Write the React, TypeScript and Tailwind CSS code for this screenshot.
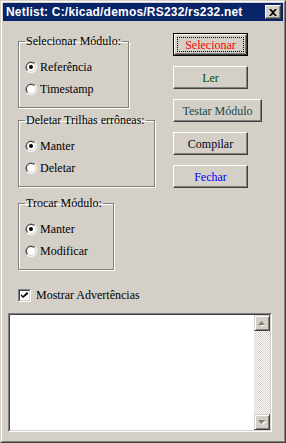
import type { ReactNode } from "react";

const FACE = "bg-[#d4d0c8]";

function Radio({ checked }: { checked: boolean }) {
  return (
    <svg width="12" height="12" viewBox="0 0 12 12" className="shrink-0">
      <circle cx="6" cy="6" r="6" fill="#ffffff" />
      <path d="M1.76 10.24 A6 6 0 0 1 10.24 1.76 Z" fill="#808080" />
      <circle cx="6" cy="6" r="5" fill="#d4d0c8" />
      <path d="M2.46 9.54 A5 5 0 0 1 9.54 2.46 Z" fill="#404040" />
      <circle cx="6" cy="6" r="4" fill="#ffffff" />
      {checked && <circle cx="6" cy="6" r="2" fill="#000000" />}
    </svg>
  );
}

function Group({ title, width, options, className }: { title: string; width: string; options: string[]; className?: string }) {
  return (
    <fieldset
      className={`${width} ${className ?? ""} border border-[#808080] pl-[6px] pt-[7px] pb-[7px] shadow-[inset_1px_1px_0_#ffffff,1px_1px_0_#ffffff]`}
    >
      <legend className="px-[1px] text-[12px] leading-[15px]">{title}</legend>
      {options.map((o, i) => (
        <div key={o} className="flex h-[22px] items-center gap-[3px]">
          <Radio checked={i === 0} />
          <span className="text-[12px] leading-[15px]">{o}</span>
        </div>
      ))}
    </fieldset>
  );
}

function Button({ children, width = "w-[75px]", color, isDefault }: { children: ReactNode; width?: string; color: string; isDefault?: boolean }) {
  if (isDefault) {
    return (
      <div className={`${width} h-[23px] border border-black`}>
        <div className="h-full border border-t-white border-l-white border-r-[#404040] border-b-[#404040] shadow-[inset_-1px_-1px_0_#808080] p-[2px]">
          <div className={`flex h-full items-center justify-center border border-dotted border-black text-[12px] ${color}`}>{children}</div>
        </div>
      </div>
    );
  }
  return (
    <div
      className={`${width} flex h-[23px] items-center justify-center border border-t-white border-l-white border-r-[#404040] border-b-[#404040] shadow-[inset_-1px_-1px_0_#808080] text-[12px] ${color}`}
    >
      {children}
    </div>
  );
}

function Arrow({ up }: { up?: boolean }) {
  return (
    <div className={`flex h-[16px] w-[16px] items-center justify-center border border-t-[#d4d0c8] border-l-[#d4d0c8] border-r-[#404040] border-b-[#404040] shadow-[inset_1px_1px_0_#ffffff,inset_-1px_-1px_0_#808080] ${FACE}`}>
      <svg width="8" height="5" viewBox="0 0 8 5">
        {up ? (
          <>
            <path d="M1 5 L4 1 L7 5 Z" fill="#ffffff" transform="translate(1,1)" />
            <path d="M0 4 L3.5 0 L7 4 Z" fill="#808080" />
          </>
        ) : (
          <>
            <path d="M1 1 L4 4 L7 1 Z" fill="#ffffff" transform="translate(1,1)" />
            <path d="M0 0 L3.5 4 L7 0 Z" fill="#808080" />
          </>
        )}
      </svg>
    </div>
  );
}

export default function App() {
  return (
    <div className={`h-[443px] w-[286px] ${FACE} font-['Liberation_Serif',serif] text-black`}>
      <div className="h-full border border-t-[#d4d0c8] border-l-[#d4d0c8] border-r-[#404040] border-b-[#404040]">
        <div className="flex h-full flex-col border border-t-white border-l-white border-r-[#808080] border-b-[#808080] p-[1px]">
          {/* title bar */}
          <div className="flex h-[18px] items-center bg-[#0a246a] pl-[3px] pr-[2px]">
            <span className="flex-1 font-['Liberation_Sans',Arial,sans-serif] text-[12px] font-bold tracking-[0.2px] text-white">
              Netlist: C:/kicad/demos/RS232/rs232.net
            </span>
            <div className={`flex h-[14px] w-[16px] items-center justify-center border border-t-white border-l-white border-r-[#404040] border-b-[#404040] shadow-[inset_-1px_-1px_0_#808080] ${FACE}`}>
              <svg width="8" height="7" viewBox="0 0 8 7">
                <path d="M0 0 L2 0 L4 2 L6 0 L8 0 L5 3.5 L8 7 L6 7 L4 5 L2 7 L0 7 L3 3.5 Z" fill="#000" />
              </svg>
            </div>
          </div>

          <div className="flex">
            <div className="ml-[15px] flex w-[155px] flex-col">
              <Group title="Selecionar Módulo:" width="w-[111px]" options={["Referência", "Timestamp"]} className="mt-[13px]" />
              <Group title="Deletar Trilhas errôneas:" width="w-[137px]" options={["Manter", "Deletar"]} className="mt-[5px]" />
              <Group title="Trocar Módulo:" width="w-[96px]" options={["Manter", "Modificar"]} className="mt-[9px]" />
            </div>
            <div className="mt-[12px] flex flex-col gap-[10px]">
              <Button color="text-[#ff0000]" isDefault>Selecionar</Button>
              <Button color="text-[#005000]">Ler</Button>
              <Button color="text-[#204848]" width="w-[89px]">Testar Módulo</Button>
              <Button color="text-[#000020]">Compilar</Button>
              <Button color="text-[#0000ff]">Fechar</Button>
            </div>
          </div>

          <div className="ml-[15px] mt-[18px] flex items-center gap-[5px]">
            <div className="h-[13px] w-[13px] border border-t-[#808080] border-l-[#808080] border-r-white border-b-white">
              <div className="flex h-full items-center justify-center border border-t-[#404040] border-l-[#404040] border-r-[#d4d0c8] border-b-[#d4d0c8] bg-white">
                <svg width="7" height="7" viewBox="0 0 7 7">
                  <path d="M0 2 L2 4 L6 0 L7 1 L7 2 L2 6 L0 4 Z" fill="#000" />
                </svg>
              </div>
            </div>
            <span className="text-[12px] leading-[15px]">Mostrar Advertências</span>
          </div>

          <div className="ml-[5px] mt-[10px] h-[119px] w-[264px] border border-t-[#808080] border-l-[#808080] border-r-white border-b-white">
            <div className="flex h-full border border-t-[#404040] border-l-[#404040] border-r-[#d4d0c8] border-b-[#d4d0c8] bg-white">
              <div className="flex-1" />
              <div className="flex w-[16px] flex-col bg-[repeating-conic-gradient(#d4d0c8_0_25%,#ffffff_0_50%)] bg-[length:2px_2px]">
                <Arrow up />
                <div className="flex-1" />
                <Arrow />
              </div>
            </div>
          </div>
        </div>
      </div>
    </div>
  );
}
